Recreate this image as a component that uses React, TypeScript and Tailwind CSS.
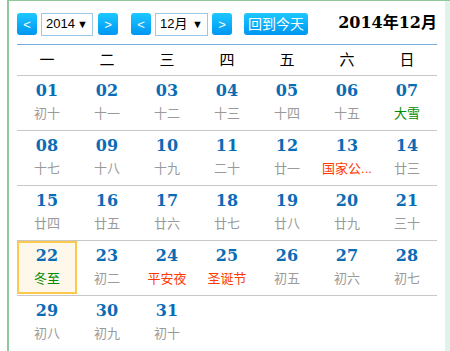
import React from 'react';

type Day = { d: string; l: string; kind?: 'term' | 'fest'; today?: boolean };

const weeks: Day[][] = [
  [
    { d: '01', l: '初十' }, { d: '02', l: '十一' }, { d: '03', l: '十二' }, { d: '04', l: '十三' },
    { d: '05', l: '十四' }, { d: '06', l: '十五' }, { d: '07', l: '大雪', kind: 'term' },
  ],
  [
    { d: '08', l: '十七' }, { d: '09', l: '十八' }, { d: '10', l: '十九' }, { d: '11', l: '二十' },
    { d: '12', l: '廿一' }, { d: '13', l: '国家公...', kind: 'fest' }, { d: '14', l: '廿三' },
  ],
  [
    { d: '15', l: '廿四' }, { d: '16', l: '廿五' }, { d: '17', l: '廿六' }, { d: '18', l: '廿七' },
    { d: '19', l: '廿八' }, { d: '20', l: '廿九' }, { d: '21', l: '三十' },
  ],
  [
    { d: '22', l: '冬至', kind: 'term', today: true }, { d: '23', l: '初二' }, { d: '24', l: '平安夜', kind: 'fest' },
    { d: '25', l: '圣诞节', kind: 'fest' }, { d: '26', l: '初五' }, { d: '27', l: '初六' }, { d: '28', l: '初七' },
  ],
  [
    { d: '29', l: '初八' }, { d: '30', l: '初九' }, { d: '31', l: '初十' },
  ],
];

const weekdays = ['一', '二', '三', '四', '五', '六', '日'];

const sans = "font-['Liberation_Sans','Noto_Sans_CJK_SC',sans-serif]";
const serif = "font-['DejaVu_Serif','Noto_Sans_CJK_SC',serif]";

const NavBtn = ({ label }: { label: string }) => (
  <button className={`w-5 h-[22px] rounded-[3px] bg-gradient-to-b from-[#1ec8ff] to-[#0096f2] text-white text-[13px] leading-none flex items-center justify-center ${sans}`}>
    {label}
  </button>
);

const Select = ({ value, w }: { value: string; w: string }) => (
  <div className={`${w} h-[23px] border border-[#9cc8e6] bg-white flex items-center justify-between pl-1 pr-[4px] text-[13px] text-black ${sans}`}>
    <span>{value}</span>
    <span className="text-[11px]">▼</span>
  </div>
);

const lunarColor = (k?: string) =>
  k === 'term' ? 'text-[#008a00]' : k === 'fest' ? 'text-[#ff3a00]' : 'text-[#9a9a9a]';

export default function App() {
  return (
    <div className="w-[450px] h-[351px] bg-white flex overflow-hidden">
      <div className="w-[7px] shrink-0" />
      <div className="w-[438px] h-full border-l-2 border-t border-[#90c89a] pl-2 pr-2 bg-white">
        <div className="flex items-center h-[44px] pt-[3px] border-b border-[#74aee0]">
          <NavBtn label="<" />
          <div className="ml-[4px]"><Select value="2014" w="w-[52px]" /></div>
          <div className="ml-[5px]"><NavBtn label=">" /></div>
          <div className="ml-[13px]"><NavBtn label="<" /></div>
          <div className="ml-[4px]"><Select value="12月" w="w-[53px]" /></div>
          <div className="ml-[4px]"><NavBtn label=">" /></div>
          <button className={`ml-[12px] h-[22px] -mt-[1px] px-[4px] rounded-[3px] bg-gradient-to-b from-[#1ec8ff] to-[#0096f2] text-white text-[14px] leading-none flex items-center ${sans}`}>
            回到今天
          </button>
          <div className={`ml-auto text-[16px] font-bold text-black -mt-[2px] ${serif}`}>2014年12月</div>
        </div>
        <div className="grid grid-cols-7 h-[31px] border-b border-[#c8c8c8] items-center">
          {weekdays.map((w) => (
            <div key={w} className={`text-center text-[15px] text-black ${sans}`}>{w}</div>
          ))}
        </div>
        {weeks.map((row, i) => (
          <div key={i} className={`grid grid-cols-7 h-[55px] ${i < weeks.length - 1 ? 'border-b border-[#c8c8c8]' : ''}`}>
            {row.map((c) => (
              <div
                key={c.d}
                className={`flex flex-col items-center ${c.today ? 'border-2 border-[#fcc94c] bg-[#fdf8e9] h-[53px] pt-[2px]' : 'pt-[4px]'}`}
              >
                <div className={`text-[16px] font-bold leading-[22px] text-[#0b6cb6] ${serif}`}>{c.d}</div>
                <div className={`text-[13px] leading-[22px] mt-[1px] whitespace-nowrap ${lunarColor(c.kind)} ${sans}`}>{c.l}</div>
              </div>
            ))}
          </div>
        ))}
      </div>
      <div className="flex-1 bg-[#def3e9] border-t border-[#90c89a]" />
    </div>
  );
}
